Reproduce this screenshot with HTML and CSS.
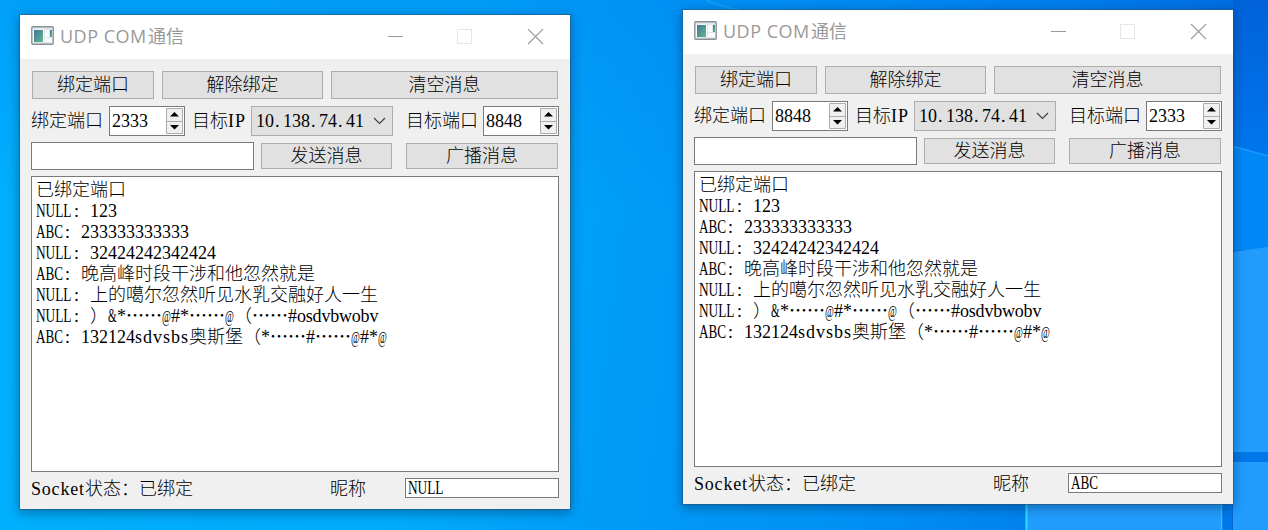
FILE: index.html
```html
<!DOCTYPE html>
<html lang="zh-CN">
<head>
<meta charset="utf-8">
<title>UDP COM通信</title>
<link rel="stylesheet" href="styles.css">
</head>
<body>
<main class="desktop">
  <svg class="wallpaper" width="1268" height="530" viewBox="0 0 1268 530">
    <defs>
      <linearGradient id="edge" x1="0" y1="0" x2="0" y2="1">
        <stop offset="0" stop-color="#0062d8"/><stop offset=".3" stop-color="#0076ee"/><stop offset="1" stop-color="#0078e8"/>
      </linearGradient>
    </defs>
    <rect x="1233" width="35" height="530" fill="url(#edge)"/>
    <path d="M1225 144L1268 156V250H1225Z" fill="#0087f6"/>
    <path d="M1225 144L1268 156" stroke="#189cff" stroke-width="1.5"/>
    <path d="M1225 253L1268 247V446H1225Z" fill="#219cfd"/>
    <path d="M1225 446H1268V452H1225Z" fill="#219cfd"/>
    <path d="M1233 462H1268V530H1233Z" fill="#219cfd"/>
    <path d="M1026 500H1222V530H1026Z" fill="#219cfd"/>
    <path d="M1222 500H1232V530H1222Z" fill="#0078e8"/>
    <path d="M1026.5 500V530" stroke="#2fe0ff" stroke-width="2"/>
    <path d="M1221.5 500V530" stroke="#2cc0ff" stroke-width="1.500"/>
    <path d="M706 0Q718 6 740 10" stroke="#2cb0ff" stroke-width="2" fill="none" opacity=".4"/>
  </svg>

  <section class="window window-a">
    <header class="titlebar">
      <svg class="app-icon" width="23" height="19" viewBox="0 0 23 19">
        <defs><linearGradient id="g" x1="0" y1="0" x2="1" y2="1"><stop offset="0" stop-color="#3f779b"/><stop offset="1" stop-color="#62b78b"/></linearGradient></defs>
        <rect x=".75" y=".75" width="21.5" height="17.5" rx="1" fill="#e3e6e9" stroke="#8b9198" stroke-width="1.3"/>
        <rect x="2" y="3.500" width="11" height="12.500" fill="#fff"/><rect x="3" y="4" width="9" height="12" fill="url(#g)"/>
        <rect x="14" y="4" width="4" height="7" fill="#fafafa"/><rect x="14" y="12" width="7" height="4" fill="#fafafa"/>
        <rect x="19" y="4" width="2" height="7" fill="url(#g)"/>
      </svg>
      <h1 class="title"><span class="title-latin">UDP COM</span>通信</h1>
      <svg class="controls" width="156" height="16" viewBox="0 0 156 16" fill="none">
        <path d="M0 7.500H15" stroke="#999"/><rect x="69.500" y=".5" width="14" height="14" stroke="#e6e6e6"/>
        <path d="M140 0L155 15M155 0L140 15" stroke="#999" stroke-width="1.1"/>
      </svg>
    </header>
    <div class="row actions"><div class="button">绑定端口</div><div class="button">解除绑定</div><div class="button">清空消息</div></div>
    <div class="row ports">
      <span class="label">绑定端口</span>
      <div class="spin"><span>2333</span><svg width="18" height="26" viewBox="0 0 18 26"><path d="M.5 .5H16.500V25.500H.5ZM.5 13.500H16.500" fill="#f0f0f0" stroke="#acacac"/><path d="M4 8.500L8.500 4L13 8.500ZM4 17H13L8.500 21.500Z" fill="#000"/></svg></div>
      <span class="label">目标<span class="ip">IP</span></span>
      <div class="combo"><span>10<i>.</i>138<i>.</i>74<i>.</i>41</span><svg width="13" height="8" viewBox="0 0 13 8"><path d="M1 1L6.500 6.500L12 1" fill="none" stroke="#404040" stroke-width="1.2"/></svg></div>
      <span class="label">目标端口</span>
      <div class="spin"><span>8848</span><svg width="18" height="26" viewBox="0 0 18 26"><path d="M.5 .5H16.500V25.500H.5ZM.5 13.500H16.500" fill="#f0f0f0" stroke="#acacac"/><path d="M4 8.500L8.500 4L13 8.500ZM4 17H13L8.500 21.500Z" fill="#000"/></svg></div>
    </div>
    <div class="row send"><div class="field"></div><div class="button">发送消息</div><div class="button">广播消息</div></div>
    <div class="log">
      <p>已绑定端口</p>
      <p><b class="null">NULL</b><i class="colon">:</i>123</p>
      <p><b class="abc">ABC</b><i class="colon">:</i>233333333333</p>
      <p><b class="null">NULL</b><i class="colon">:</i>32424242342424</p>
      <p><b class="abc">ABC</b><i class="colon">:</i>晚高峰时段干涉和他忽然就是</p>
      <p><b class="null">NULL</b><i class="colon">:</i>上的噶尔忽然听见水乳交融好人一生</p>
      <p><b class="null">NULL</b><i class="colon">:</i>）<b class="amp">&amp;</b>*<span class="dots">……</span><b class="at">@</b>#*<span class="dots">……</span><b class="at">@</b>（<span class="dots">……</span>#<span class="word-o">osdvbwobv</span></p>
      <p><b class="abc">ABC</b><i class="colon">:</i>132124<span class="word-s">sdvsbs</span>奥斯堡（*<span class="dots">……</span>#<span class="dots">……</span><b class="at">@</b>#*<b class="at">@</b></p>
    </div>
    <footer class="row status"><span class="state"><span class="socket">Socket</span>状态：已绑定</span><span class="nick">昵称</span><div class="field"><b class="null">NULL</b></div></footer>
  </section>

  <section class="window window-b">
    <header class="titlebar">
      <svg class="app-icon" width="23" height="19" viewBox="0 0 23 19">
        <rect x=".75" y=".75" width="21.5" height="17.5" rx="1" fill="#e3e6e9" stroke="#8b9198" stroke-width="1.3"/>
        <rect x="2" y="3.500" width="11" height="12.500" fill="#fff"/><rect x="3" y="4" width="9" height="12" fill="url(#g)"/>
        <rect x="14" y="4" width="4" height="7" fill="#fafafa"/><rect x="14" y="12" width="7" height="4" fill="#fafafa"/>
        <rect x="19" y="4" width="2" height="7" fill="url(#g)"/>
      </svg>
      <h1 class="title"><span class="title-latin">UDP COM</span>通信</h1>
      <svg class="controls" width="156" height="16" viewBox="0 0 156 16" fill="none">
        <path d="M0 7.500H15" stroke="#999"/><rect x="69.500" y=".5" width="14" height="14" stroke="#e6e6e6"/>
        <path d="M140 0L155 15M155 0L140 15" stroke="#999" stroke-width="1.1"/>
      </svg>
    </header>
    <div class="row actions"><div class="button">绑定端口</div><div class="button">解除绑定</div><div class="button">清空消息</div></div>
    <div class="row ports">
      <span class="label">绑定端口</span>
      <div class="spin"><span>8848</span><svg width="18" height="26" viewBox="0 0 18 26"><path d="M.5 .5H16.500V25.500H.5ZM.5 13.500H16.500" fill="#f0f0f0" stroke="#acacac"/><path d="M4 8.500L8.500 4L13 8.500ZM4 17H13L8.500 21.500Z" fill="#000"/></svg></div>
      <span class="label">目标<span class="ip">IP</span></span>
      <div class="combo"><span>10<i>.</i>138<i>.</i>74<i>.</i>41</span><svg width="13" height="8" viewBox="0 0 13 8"><path d="M1 1L6.500 6.500L12 1" fill="none" stroke="#404040" stroke-width="1.2"/></svg></div>
      <span class="label">目标端口</span>
      <div class="spin"><span>2333</span><svg width="18" height="26" viewBox="0 0 18 26"><path d="M.5 .5H16.500V25.500H.5ZM.5 13.500H16.500" fill="#f0f0f0" stroke="#acacac"/><path d="M4 8.500L8.500 4L13 8.500ZM4 17H13L8.500 21.500Z" fill="#000"/></svg></div>
    </div>
    <div class="row send"><div class="field"></div><div class="button">发送消息</div><div class="button">广播消息</div></div>
    <div class="log">
      <p>已绑定端口</p>
      <p><b class="null">NULL</b><i class="colon">:</i>123</p>
      <p><b class="abc">ABC</b><i class="colon">:</i>233333333333</p>
      <p><b class="null">NULL</b><i class="colon">:</i>32424242342424</p>
      <p><b class="abc">ABC</b><i class="colon">:</i>晚高峰时段干涉和他忽然就是</p>
      <p><b class="null">NULL</b><i class="colon">:</i>上的噶尔忽然听见水乳交融好人一生</p>
      <p><b class="null">NULL</b><i class="colon">:</i>）<b class="amp">&amp;</b>*<span class="dots">……</span><b class="at">@</b>#*<span class="dots">……</span><b class="at">@</b>（<span class="dots">……</span>#<span class="word-o">osdvbwobv</span></p>
      <p><b class="abc">ABC</b><i class="colon">:</i>132124<span class="word-s">sdvsbs</span>奥斯堡（*<span class="dots">……</span>#<span class="dots">……</span><b class="at">@</b>#*<b class="at">@</b></p>
    </div>
    <footer class="row status"><span class="state"><span class="socket">Socket</span>状态：已绑定</span><span class="nick">昵称</span><div class="field"><b class="abc">ABC</b></div></footer>
  </section>
</main>
</body>
</html>
```
FILE: styles.css
```css
* { box-sizing: border-box; }
body { margin: 0; }
.desktop {
  position: relative; width: 1268px; height: 530px; overflow: hidden;
  background:
    linear-gradient(to bottom, rgba(0, 110, 235, .25), rgba(0, 150, 255, 0) 40%),
    linear-gradient(97deg, #00b0fd 0%, #00aafb 35%, #009af7 52%, #0092f5 66%, #0084ee 80%, #0066d8 97%);
}
.wallpaper { position: absolute; left: 0; top: 0; }

.window {
  position: absolute; width: 550px; height: 494px;
  display: flex; flex-direction: column;
  background: #f0f0f0; color: #000;
  font: 300 18px/20px "Liberation Serif", "Noto Sans CJK SC", serif;
  box-shadow: 0 0 0 1px rgba(40, 80, 110, .5), 0 3px 10px 1px rgba(0, 30, 60, .4);
}
.window-a { left: 20px; top: 15px; }
.window-b { left: 683px; top: 10px; }

.titlebar { display: flex; height: 44px; background: #fff; padding: 0 26px 0 11px; }
.app-icon { margin-top: 11px; }
.title {
  flex: 1; margin: 9px 0 0 6px; color: #999; white-space: nowrap;
  font: 400 18px/24px "Open Sans", "Noto Sans CJK SC", sans-serif;
}
.title-latin { display: inline-block; width: 88px; letter-spacing: .5px; }
.controls { margin-top: 14px; }

.row { display: flex; flex: none; margin: 0 11px; white-space: nowrap; }
.button {
  display: flex; align-items: center; justify-content: center;
  background: #e1e1e1; border: 1px solid #adadad;
}
.actions { display: grid; grid-template-columns: 122px 161px 227px; gap: 8px; height: 28px; margin: 12px 12px 0; }
.ports { display: grid; grid-template-columns: 78px 76px 7px 59px 142px 13px 77px 76px; height: 30px; margin-top: 7px; align-items: center; }
.ports .label:nth-child(3) { grid-column: 4; }
.ports .label:nth-child(5) { grid-column: 7; }
.ip { letter-spacing: 1px; }
.spin {
  height: 30px; display: flex; align-items: center; justify-content: space-between;
  background: #fff; border: 1px solid #7a7a7a; padding-left: 2px;
}
.combo {
  height: 30px; display: flex; align-items: center; justify-content: space-between;
  background: #e1e1e1; border: 1px solid #adadad; padding: 0 6px 0 4px;
}
.combo i { display: inline-block; width: 9px; padding-left: 1px; font-style: normal; }
.field { background: #fff; border: 1px solid #7a7a7a; }

.send { height: 28px; margin-top: 6px; align-items: center; }
.send .field { width: 223px; height: 28px; margin-right: 7px; }
.send .button { width: 131px; height: 26px; margin-right: 14px; }
.send .button:last-child { width: 152px; margin-right: 0; }

.log {
  height: 296px; margin: 6px 11px 0; padding: 3px 4px;
  background: #fff; border: 1px solid #7a7a7a;
}
.log p { margin: 0; height: 21px; line-height: 21px; white-space: nowrap; }

/* Latin runs are fitted to a 9px half-width cell per character */
.window b { display: inline-block; font-weight: 400; transform-origin: 0 50%; white-space: nowrap; }
.window .null { width: 36px; transform: scaleX(.74); }
.window .abc { width: 27px; transform: scaleX(.73); }
.window .amp { width: 9px; transform: scaleX(.62); }
.window .at { width: 9px; font-size: 16px; line-height: 17px; transform: scaleX(.6); }
.colon { display: inline-block; width: 18px; padding-left: 2px; font-style: normal; }
.dots { font-family: "Noto Sans CJK SC", sans-serif; font-weight: 500; line-height: 0; }
.word-o { letter-spacing: -.2px; }
.word-s { letter-spacing: 1px; }
.socket { display: inline-block; width: 54px; letter-spacing: .8px; }

.status { height: 20px; margin-top: 6px; }
.state { width: 299px; }
.nick { width: 75px; }
.state, .nick { padding-top: 1px; }
.status .field { width: 154px; height: 20px; padding-left: 2px; line-height: 19px; }
```
